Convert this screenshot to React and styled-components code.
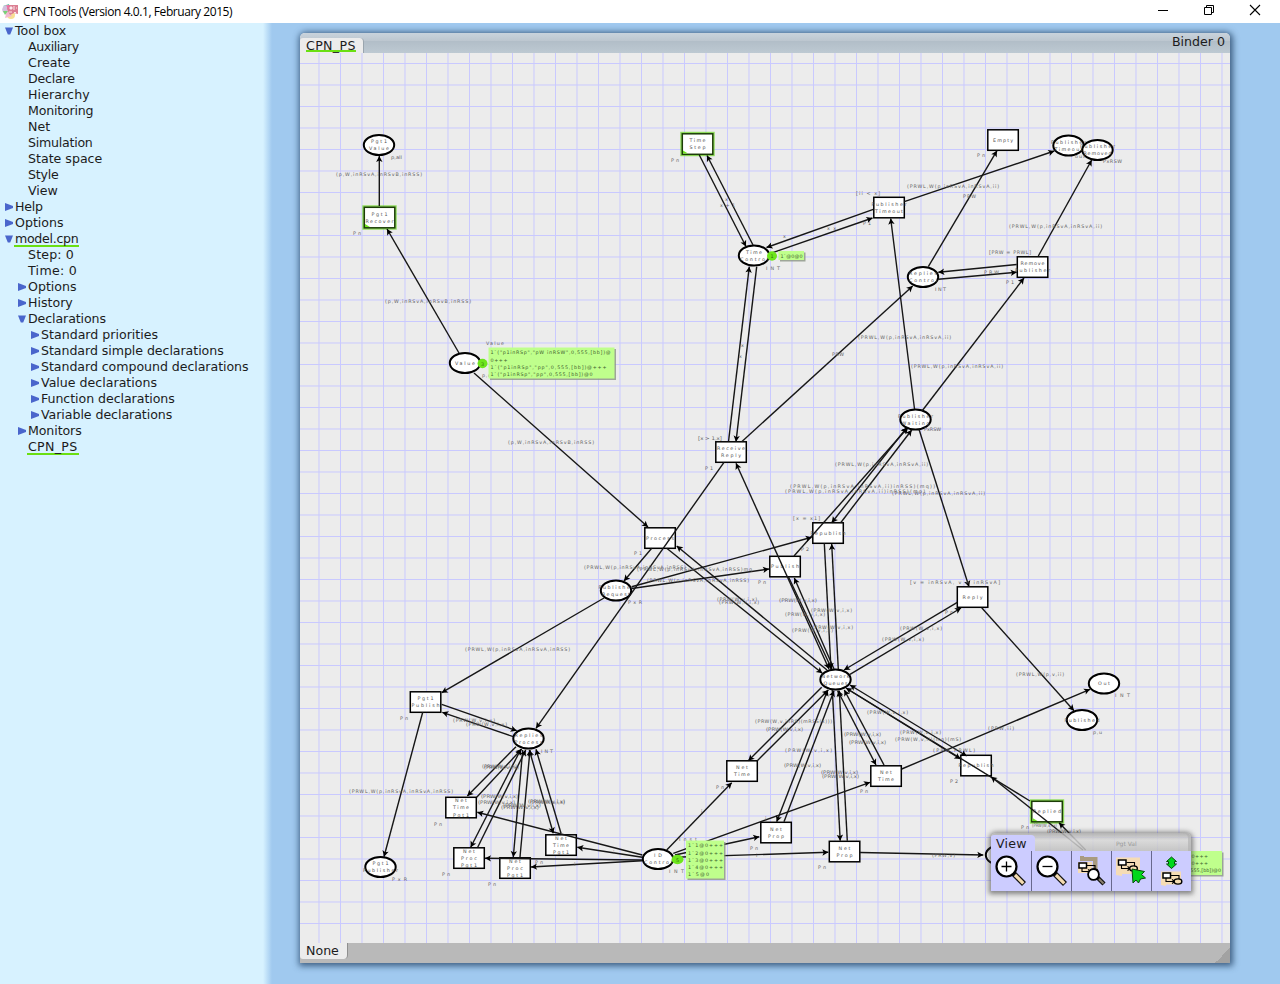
import React from 'react';
import styled, { createGlobalStyle } from 'styled-components';

const Global = createGlobalStyle`
  * { box-sizing: border-box; }
  body { margin: 0; overflow: hidden; font-family: 'DejaVu Sans', sans-serif; font-size: 12.6px; color: #1c1c1c; }
`;

const Window = styled.div`
  display: flex;
  flex-direction: column;
  width: 1280px;
  height: 984px;
  background: #a0c9ef;
`;
const TitleBar = styled.header`
  display: flex;
  align-items: center;
  height: 23px;
  padding-left: 2px;
  background: #fff;
`;
const Title = styled.h1`
  flex: 1;
  margin: 0 0 0 5px;
  color: #000;
  font: 400 12px/22px 'Open Sans', sans-serif;
  letter-spacing: -0.42px;
`;
const WindowButton = styled.span`
  display: flex;
  justify-content: center;
  align-items: center;
  align-self: flex-start;
  width: 46px;
  height: 20px;
  padding-right: 4px;
`;
const Body = styled.div`
  display: flex;
  flex: 1;
`;
const Sidebar = styled.nav`
  width: 300px;
  background: linear-gradient(90deg, #d7f2ff 263px, #a0c9ef 272px);
`;
const Row = styled.div`
  display: flex;
  align-items: center;
  height: 16px;
  padding-left: ${(p) => 5 + p.$level * 13}px;
  white-space: nowrap;
`;
const Toggle = styled.svg`
  width: 8px;
  height: 8px;
  margin-right: 1px;
  fill: #4a66cc;
`;
const Label = styled.span`
  height: 16px;
  padding: 0 1px;
  line-height: 16px;
  letter-spacing: ${(p) => p.$track}px;
  border-bottom: 2px solid ${(p) => (p.$marked ? '#6adf12' : 'transparent')};
`;
const Binder = styled.main`
  display: flex;
  flex-direction: column;
  position: relative;
  width: 930px;
  height: 930px;
  margin-top: 10px;
  border-radius: 5px 5px 0 0;
  background: #ececec;
  box-shadow: 1px 1px 6px 2px rgba(30, 60, 95, 0.75);
`;
const BinderHead = styled.div`
  display: flex;
  justify-content: space-between;
  align-items: flex-end;
  height: 20px;
  padding-right: 5px;
  border-radius: 5px 5px 0 0;
  background: linear-gradient(#c9d3dc, #bcc6cf 40%, #b2bec8 42%, #bdc9d2);
`;
const PageTab = styled.div`
  height: 15px;
  padding: 0 7px 0 6px;
  line-height: 15px;
  background: #ececec;
  border-radius: 3px 4px 0 0;
  border-right: 1px solid #9aa5ae;
`;
const TabText = styled.span`
  display: block;
  height: 14px;
  line-height: 15px;
  letter-spacing: 0.35px;
  border-bottom: 2px solid #6adf12;
`;
const BinderName = styled.span`
  line-height: 22px;
`;
const Canvas = styled.svg`
  display: block;
  width: 930px;
  height: 890px;
`;
const BinderFoot = styled.div`
  display: flex;
  justify-content: space-between;
  height: 20px;
  background: #b9b9b9;
`;
const StatusTab = styled.div`
  width: 48px;
  height: 16px;
  padding-left: 6px;
  line-height: 15px;
  background: #ececec;
  border-radius: 0 0 4px 3px;
  border-right: 1px solid #8f8f8f;
`;
const Grip = styled.span`
  align-self: flex-end;
  width: 15px;
  height: 15px;
  background: linear-gradient(135deg, transparent 50%, #a2a2a2 50%);
`;
const Palette = styled.section`
  position: absolute;
  left: 691px;
  top: 800px;
  width: 200px;
  height: 58px;
  box-shadow: 0 1px 5px 2px rgba(60, 60, 60, 0.6);
  border-radius: 5px 5px 0 0;
`;
const PaletteHead = styled.div`
  display: flex;
  align-items: flex-end;
  height: 18px;
  border-radius: 5px 5px 0 0;
  background: linear-gradient(rgba(170, 170, 170, 0.85), rgba(215, 215, 215, 0.85) 40%, rgba(190, 190, 190, 0.85));
  box-shadow: inset -3px 0 0 rgba(175, 175, 175, 0.6);
`;
const PaletteTab = styled.div`
  width: 44px;
  height: 16px;
  padding-left: 5px;
  line-height: 18px;
  letter-spacing: 0.2px;
  background: #ccccff;
  border-radius: 3px 4px 0 0;
`;
const PaletteCaption = styled.span`
  flex: 1;
  padding-left: 81px;
  color: #999;
  font-size: 6px;
  line-height: 15px;
`;
const Tools = styled.div`
  display: flex;
  height: 40px;
  background: #ccccff;
`;
const Tool = styled.button`
  width: 40px;
  height: 40px;
  padding: 0;
  border: 0;
  border-left: ${(p) => (p.$first ? 'none' : '1px solid #68688e')};
  background: #ccccff;
  svg { display: block; width: 38px; height: 40px; }
`;

const tree = [
  [0, 'open', 'Tool box'],
  [1, '', 'Auxiliary', -0.45],
  [1, '', 'Create', 0.1],
  [1, '', 'Declare', -0.2],
  [1, '', 'Hierarchy', 0.1],
  [1, '', 'Monitoring', -0.2],
  [1, '', 'Net'],
  [1, '', 'Simulation', -0.25],
  [1, '', 'State space'],
  [1, '', 'Style', -0.2],
  [1, '', 'View'],
  [0, 'shut', 'Help', -0.2],
  [0, 'shut', 'Options'],
  [0, 'open', 'model.cpn', -0.3, true],
  [1, '', 'Step: 0', 0.15],
  [1, '', 'Time: 0', 0.3],
  [1, 'shut', 'Options'],
  [1, 'shut', 'History'],
  [1, 'open', 'Declarations', -0.1],
  [2, 'shut', 'Standard priorities'],
  [2, 'shut', 'Standard simple declarations', -0.06],
  [2, 'shut', 'Standard compound declarations', -0.06],
  [2, 'shut', 'Value declarations'],
  [2, 'shut', 'Function declarations', -0.06],
  [2, 'shut', 'Variable declarations', -0.06],
  [1, 'shut', 'Monitors', -0.1],
  [1, '', 'CPN_PS', 0.3, true],
];

const places = [
  [379, 145, 'Pgt1', 'Value'],
  [465, 363, 'Value'],
  [754, 255.5, 'Time', 'Control'],
  [923, 277, 'Replies', 'Control'],
  [1068.5, 145.5, 'Publisher', 'Timeout'],
  [1097.5, 150, 'Publisher', 'Removed'],
  [915.5, 419.5, 'Publisher', 'Waiting'],
  [616, 590.5, 'Publisher', 'Request'],
  [835.5, 679.5, 'Network', 'Queues'],
  [528.5, 738.5, 'Replies', 'Process'],
  [380.5, 867, 'Pgt1', 'Publisher'],
  [658, 859, 'ID', 'Control'],
  [1104, 683.5, 'Out'],
  [1082, 720, 'Published'],
  [1001, 855, ''],
];
const transitions = [
  [379.5, 217.5, 'g', 'Pgt1', 'Recover'],
  [697.5, 144, 'g', 'Time', 'Step'],
  [1003, 140, '', 'Empty'],
  [889, 207.5, '', 'Publisher', 'Timeout'],
  [1032.5, 267, '', 'Remove', 'Publisher'],
  [731, 452, '', 'Receive', 'Reply'],
  [660, 538, '', 'Process'],
  [828, 533, '', 'Republish'],
  [785, 566.5, '', 'Publish'],
  [972.5, 597, '', 'Reply'],
  [425.5, 702, '', 'Pgt1', 'Publish'],
  [461, 807.5, '', 'Net', 'Time', 'Pgt1'],
  [469, 858, '', 'Net', 'Proc', 'Pgt1'],
  [515, 868, '', 'Net', 'Proc', 'Pgt1'],
  [561, 845, '', 'Net', 'Time', 'Pgt1'],
  [742, 771, '', 'Net', 'Time'],
  [776, 832.5, '', 'Net', 'Prop'],
  [844.5, 851.5, '', 'Net', 'Prop'],
  [886, 776, '', 'Net', 'Time'],
  [976, 765.5, '', 'Republish'],
  [1047, 811.5, 'g', 'Replied'],
];

/* Each arc: x1, y1, x2, y2, and 1 where both ends carry a head. */
const arcs = [
  [379.3, 206, 379.3, 156], [459, 353, 387, 229], [474, 373, 648, 527],
  [699.3, 155, 746, 246.5], [753, 245, 707, 155.5], [873.3, 209.3, 766.5, 247.5],
  [772.7, 252.7, 872.5, 218], [904.3, 201.7, 1054.3, 151], [928.3, 266.7, 997, 150.7],
  [1038.3, 256, 1091.7, 160], [1016.7, 264.5, 938.3, 272.3], [938.3, 279.3, 1016.7, 272.3],
  [922, 411, 1024, 278], [914.5, 409, 890.7, 218.5], [741.7, 441.7, 912.7, 286],
  [728.5, 441.7, 749.3, 266.7], [756.7, 266.7, 736, 441.7], [724, 462.3, 536, 728.3],
  [829, 669, 736, 463.3, 1], [919, 429.3, 969, 586.7], [840.7, 522.7, 911.7, 430],
  [906.7, 427.7, 831.7, 522.7, 1], [794, 556, 908, 427.5], [651.7, 548.3, 624, 581],
  [666.7, 548.3, 822.3, 673.3], [827, 670, 676.7, 546], [631.7, 586.7, 811.7, 537.3],
  [631.7, 588.5, 769, 569], [604, 598, 441.7, 692.7], [788.5, 577, 832, 669.5],
  [834, 669, 794.3, 578], [824.3, 543.3, 831, 669], [838.3, 669, 831.7, 544],
  [957.3, 602.3, 844, 670], [850, 674.3, 961, 608], [981.7, 607.7, 1074, 710.7],
  [901.7, 769, 1090, 689.3], [821.7, 687.3, 748.3, 760.7], [757.3, 760.7, 828.3, 690],
  [827.7, 690, 776.7, 821.7, 1], [784, 821.7, 834, 690.7], [832.3, 690, 840.2, 840.7],
  [847.3, 840.7, 839.3, 690.7], [837.7, 690.7, 876, 765, 1], [884, 765, 844.3, 690],
  [847.3, 689, 960.5, 759], [966.7, 756, 850, 685, 1], [1030, 801, 846, 688],
  [1083, 850, 991, 776.7], [1085.7, 850, 1059, 822.7], [666.7, 850, 731.7, 782.7],
  [673.3, 853.3, 870, 782.3], [675, 855, 759.3, 836.7], [674, 857.3, 828.3, 852.3],
  [860, 852.5, 983.3, 855], [642.3, 855, 477.3, 812.3], [642.3, 857.3, 577.3, 847.3],
  [642, 860, 485, 858.3], [642, 860.7, 531, 867], [441.7, 704.3, 516.7, 730.7],
  [513.3, 736.7, 442.3, 712.3], [516, 746.7, 467.3, 796], [476.7, 797.3, 521.7, 749],
  [521, 749, 470.7, 847.3, 1], [477.7, 847.3, 525.7, 750], [522.7, 750, 513.3, 857],
  [520, 857, 530, 750], [529.3, 750, 553.3, 833.3, 1], [561, 833.3, 536, 749.3],
  [422.7, 712.3, 384, 856.7],
];

/* Inscriptions: x, baseline y, width, text. */
const A = '(p,W,inRSvA,inRSvB,inRSS)';
const B = '(PRWL,W(p,inRSvA,inRSvA,ii)';
const C = '(PRWL,W(p,inRSvA,inRSvA,inRSS)';
const D = '(PRW(W,v,i,x)';
const notes = [
  [391, 159, 11, 'p,all'], [336, 175.5, 86, A], [353, 235, 8, 'Pn'], [385, 302.5, 86, A],
  [486, 344.5, 18, 'Value'], [482, 377, 9, 'p,u'], [671, 162, 8, 'Pn'], [508, 443.5, 86, A],
  [725, 201, 5, 'x'], [720, 207, 15, 'x+1'], [783, 237.5, 4, 'x'], [827, 230, 9, 'x x'],
  [766, 270, 14, 'INT'], [863, 225, 8, 'P1'], [856, 195, 24, '[ii < x]'], [907, 187.5, 92, B],
  [977, 157, 8, 'Pn'], [963, 197.5, 13, 'PRW'], [1075, 158, 10, 'out'], [1103, 162.5, 19, 'PxRSW'],
  [1009, 227.5, 93, B], [989, 254, 42, '[PRW = PRWL]'], [984, 273.5, 15, 'PRW'], [1006, 284, 8, 'P1'],
  [935, 291, 11, 'INT'], [858, 338.5, 93, B], [832, 356, 12, 'PRW'], [911, 367.5, 92, B],
  [741, 346.5, 5, 'x'], [739, 357.5, 5, 'x'], [698, 440, 24, '[x > 1,x]'], [705, 470, 8, 'P1'],
  [924, 431, 17, 'PxRSW'], [835, 466, 93, B], [790, 488, 145, B + 'inRSS)(mq))'],
  [785, 492.5, 140, B + 'inRSS)(mp)'], [892, 494.5, 93, B], [793, 520, 27, '[x = x1]'],
  [634, 555, 8, 'P1'], [584, 568.5, 102, C], [637, 571, 115, C + 'mq'], [647, 582, 102, C],
  [628, 604, 14, 'PxR'], [717, 601, 40, D], [719, 604, 40, D], [801, 551, 8, 'P2'],
  [758, 584, 8, 'Pn'], [779, 602, 38, D], [785, 616, 40, D], [811, 612, 41, D],
  [792, 632, 41, D], [812, 629, 41, D], [910, 584, 90, '[v = inRSvA, v = inRSvA]'],
  [945, 614, 8, 'Pn'], [900, 629.5, 42, D], [882, 641, 42, D], [1016, 676, 48, '(PRWL,W(p,v,ii)'],
  [1115, 697, 15, 'INT'], [1093, 734, 9, 'p,u'], [988, 730, 26, '(PRW,ii)'], [465, 651, 105, C],
  [400, 720, 8, 'Pn'], [453, 722, 42, D], [466, 726, 41, D], [541, 753, 12, 'INT'],
  [482, 768, 35, D], [484, 769, 35, D], [349, 793, 104, C], [481, 797.5, 37, D], [478, 803.5, 37, D],
  [501, 808.5, 38, D], [503, 807, 38, D], [528, 803, 37, D], [530, 804, 35, D],
  [434, 826, 8, 'Pn'], [442, 876, 8, 'Pn'], [488, 886, 8, 'Pn'], [535, 864, 8, 'Pn'],
  [392, 881, 15, 'PxR'], [613, 854, 5, 'i'], [574, 866, 5, 'i'], [669, 873, 15, 'INT'],
  [679, 841, 18, 'Inst'], [755, 723, 77, '(PRW(W,v,inRS)(mRSS(x)))'], [766, 731, 37, D],
  [785, 752, 47, D], [784, 767, 37, D], [821, 774, 37, D], [822, 778, 37, D],
  [844, 736, 37, D], [849, 744, 37, D], [867, 714, 41, D], [900, 734, 41, D],
  [895, 741, 66, '(PRW(W,v,ii)(mq)(mS)'], [933, 752, 42, '(PRW,PRWL)'], [716, 789, 8, 'Pn'],
  [750, 850, 8, 'Pn'], [818, 869, 8, 'Pn'], [860, 793, 8, 'Pn'], [950, 783, 8, 'P2'],
  [701, 813, 4, 'i'], [765, 820, 4, 'i'], [756, 857, 4, 'i'], [932, 857, 23, '(PRW,v)'],
  [1021, 829, 8, 'Pn'], [1032, 827, 25, D], [1047, 833, 34, D],
];

const Triangle = ({ kind }) => (
  <Toggle viewBox="0 0 8 8">
    {kind === 'open' && <path d="M0 0.5H8L5.2 7.5H2.8Z" />}
    {kind === 'shut' && <path d="M0 0L8 3V5L0 8Z" />}
  </Toggle>
);

const Words = ({ x, y, lines }) =>
  lines.map((t, i) => {
    const w = t.length > 7 ? 35 : t.length * 4;
    const dy = (i - (lines.length - 1) / 2) * 7.2 + 1.8;
    return t ? (
      <text key={i} x={x - w / 2} y={y + dy} textLength={w}>{t}</text>
    ) : null;
  });

const Head = ({ x1, y1, x2, y2 }) => {
  const a = (Math.atan2(y2 - y1, x2 - x1) * 180) / Math.PI;
  return <path d="M0 0L-6 -3.2L-4.6 0L-6 3.2Z" transform={`translate(${x2} ${y2}) rotate(${a})`} />;
};

const Note = ({ x, y, w, h, lines, dot, dotW = 10, dotText }) => (
  <g>
    <rect x={x + 1.5} y={y + 1.5} width={w} height={h} fill="#8b9585" opacity="0.8" />
    <rect x={x} y={y} width={w} height={h} fill="#bfff8c" />
    {lines.map(([t, lw], i) => (
      <text key={i} x={x + 2} y={y + 6.8 + i * 7.2} textLength={lw} fill="#40602c">{t}</text>
    ))}
    {dot && <ellipse cx={dot[0]} cy={dot[1]} rx={dotW / 2} ry="4.7" fill="#6ee51d" />}
    {dot && <text x={dot[0] - 1.5} y={dot[1] + 2} fill="#2c6a0c">{dotText}</text>}
  </g>
);

const gridX = Array.from({ length: 43 }, (_, i) => 319 + i * 21.5);
const gridY = Array.from({ length: 41 }, (_, i) => 63.5 + i * 21.5);

const Net = () => (
  <Canvas viewBox="300 53 930 890" fontFamily="DejaVu Sans, sans-serif" fontSize="4.8">
    <g stroke="#c9c9ff" strokeWidth="1">
      {gridX.map((x) => <path key={x} d={`M${x} 53V943`} />)}
      {gridY.map((y) => <path key={y} d={`M300 ${y}H1230`} />)}
    </g>
    <g fill="#fff" stroke="#000" strokeWidth="2">
      {places.map(([x, y]) => <ellipse key={x} cx={x} cy={y} rx="15.2" ry="10.1" />)}
    </g>
    {transitions.map(([x, y, g]) => (
      <g key={`${x}-${y}`}>
        {g && <rect x={x - 16} y={y - 11} width="32" height="22" fill="none" stroke="#6fd52a" strokeWidth="2.4" opacity="0.75" />}
        <rect x={x - 15.2} y={y - 10.2} width="30.5" height="20.5" fill="#fff" stroke={g ? '#1c3d08' : '#000'} strokeWidth="1.5" />
        {g && <path d={`M${x - 14.5} ${y + 9.5}v-3l5 3z`} fill="#6ee51d" />}
      </g>
    ))}
    <g fill="#505050">
      {places.map(([x, y, ...t]) => <Words key={x} x={x} y={y} lines={t} />)}
      {transitions.map(([x, y, g, ...t]) => <Words key={`${x}-${y}`} x={x} y={y} lines={t} />)}
    </g>
    <g stroke="#161616" strokeWidth="1.4">
      {arcs.map(([a, b, c, d], i) => <path key={i} d={`M${a} ${b}L${c} ${d}`} />)}
    </g>
    {arcs.map(([a, b, c, d, both], i) => (
      <g key={i}>
        <Head x1={a} y1={b} x2={c} y2={d} />
        {both && <Head x1={c} y1={d} x2={a} y2={b} />}
      </g>
    ))}
    <g fill="#646464">
      {notes.map(([x, y, w, t], i) => (
        <text key={i} x={x} y={y} textLength={w} lengthAdjust={t.length * 3 > w ? 'spacingAndGlyphs' : 'spacing'}>{t}</text>
      ))}
    </g>
    <Note x={488.5} y={347.5} w={126} h={31} dot={[482.5, 363.5]} dotText="3"
      lines={[['1`("p1inRSp","pW inRSW",0,555,[bb])@', 120], ['0+++', 17], ['1`("p1inRSp","pp",0,555,[bb])@+++', 116], ['1`("p1inRSp","pp",0,555,[bb])@0', 102]]} />
    <Note x={778.5} y={251} w={25.5} h={9} dot={[772, 256]} dotText="1" lines={[['1`@0@0', 22]]} />
    <Note x={686} y={840.5} w={38} h={38} dot={[677.5, 859.5]} dotW={12} dotText="5"
      lines={[['1`1@0+++', 35], ['1`2@0+++', 35], ['1`3@0+++', 35], ['1`4@0+++', 35], ['1`5@0', 21]]} />
    <Note x={1150} y={851} w={72} h={24}
      lines={[['1`("p1inRSp",0+++', 56], ['1`("p1inRSp",0+++', 56], ['1`("p1inRSp",0,555,[bb])@0', 69]]} />
  </Canvas>
);

const Lens = ({ plus }) => (
  <svg viewBox="0 0 38 40">
    <path d="M22 22L33 33" stroke="#111" strokeWidth="5.6" />
    <path d="M24 24L32.3 32.3" stroke="#f5dcb0" strokeWidth="3.2" />
    <circle cx="15.5" cy="15.5" r="10" fill="#fff" stroke="#000" strokeWidth="2.2" />
    <path d={plus ? 'M10.5 15.5H20.5M15.5 10.5V20.5' : 'M10.5 15.5H20.5'} stroke="#000" strokeWidth="1.3" />
  </svg>
);
const MiniNet = ({ x, y }) => (
  <g transform={`translate(${x} ${y})`} stroke="#000" fill="none">
    <rect x="0" y="0" width="7.5" height="5" fill="#fff" strokeWidth="1.5" />
    <path d="M8 2.5H16V6M3 5V8.5H11M9 6.5L12 8.5L9 10.5" strokeWidth="1.1" />
    <ellipse cx="15" cy="8.5" rx="3.8" ry="2.6" fill="#f5dcb0" strokeWidth="1.4" />
  </g>
);

const icons = [
  <Lens plus />,
  <Lens />,
  <svg viewBox="0 0 38 40">
    <path d="M8 5H12V6H25.5V20H21V10H8Z" fill="#a99b80" />
    <path d="M6 11H20V22H6Z" fill="#f5dcb5" />
    <MiniNet x={7} y={12} />
    <path d="M25 26L32 33" stroke="#111" strokeWidth="4.4" />
    <path d="M27 28L31.5 32.5" stroke="#8c816e" strokeWidth="2" />
    <circle cx="21.5" cy="23.5" r="5.4" fill="#fff" stroke="#000" strokeWidth="1.8" />
  </svg>,
  <svg viewBox="0 0 38 40">
    <path d="M4 6.5H28V23H10V25L4 24Z" fill="#f5dcb5" />
    <MiniNet x={6.5} y={9} />
    <path d="M20 18L32.5 20.5L29.5 23.5L33.5 27L28.5 28L26.5 32L24 29L21 32Z" fill="#00d81a" stroke="#064d0a" strokeWidth="1" />
  </svg>,
  <svg viewBox="0 0 38 40">
    <path d="M19.5 6L24.5 10.5H22.5V13H24.5L19.5 17.5L14.5 13H16.5V10.5H14.5Z" fill="#00d81a" stroke="#064d0a" strokeWidth="1" />
    <path d="M9 20.5H29V33.5H14V35L9 34Z" fill="#f5dcb5" />
    <MiniNet x={11} y={22} />
  </svg>,
];

const AppIcon = () => (
  <svg width="16" height="17" viewBox="0 0 16 17">
    <path d="M1 3L7 1L8 7Z" fill="#59c7a2" />
    <circle cx="4.5" cy="6.5" r="4.3" fill="#d3bfdd" />
    <circle cx="9" cy="12" r="4" fill="#f7df92" />
    <path d="M5 7L10 13L3 15Z" fill="#f4b8d0" />
    <path d="M6 2H16V11L12 10L8 12L5 6Z" fill="#db7f92" />
    <path d="M8 4H10V6H8ZM12 3V7M14 5H15M7 9H10M12 9.5H14" fill="#fff" stroke="#fbe4e8" strokeWidth="1" />
    <path d="M1 8L6 8L3 12Z" fill="#79cf76" />
    <path d="M4 2L8 3L6 6Z" fill="#f06fa6" />
  </svg>
);

export default function App() {
  return (
    <Window>
      <Global />
      <TitleBar>
        <AppIcon />
        <Title>CPN Tools (Version 4.0.1, February 2015)</Title>
        <WindowButton><svg width="12" height="12"><path d="M1 6.5H11" stroke="#000" /></svg></WindowButton>
        <WindowButton>
          <svg width="12" height="12" fill="none" stroke="#000"><path d="M1.5 3.5H8.5V10.5H1.5ZM3.5 3V1.5H10.5V8.5H9" /></svg>
        </WindowButton>
        <WindowButton><svg width="12" height="12"><path d="M1 1L11 11M11 1L1 11" stroke="#000" strokeWidth="1.1" /></svg></WindowButton>
      </TitleBar>
      <Body>
        <Sidebar>
          {tree.map(([level, kind, text, track = 0, marked], i) => (
            <Row key={i} $level={level}>
              <Triangle kind={kind} />
              <Label $marked={marked} $track={track}>{text}</Label>
            </Row>
          ))}
        </Sidebar>
        <Binder>
          <BinderHead>
            <PageTab><TabText>CPN_PS</TabText></PageTab>
            <BinderName>Binder 0</BinderName>
          </BinderHead>
          <Net />
          <BinderFoot>
            <StatusTab>None</StatusTab>
            <Grip />
          </BinderFoot>
          <Palette>
            <PaletteHead>
              <PaletteTab>View</PaletteTab>
              <PaletteCaption>Pgt Val</PaletteCaption>
            </PaletteHead>
            <Tools>
              {icons.map((icon, i) => <Tool key={i} $first={i === 0}>{icon}</Tool>)}
            </Tools>
          </Palette>
        </Binder>
      </Body>
    </Window>
  );
}
